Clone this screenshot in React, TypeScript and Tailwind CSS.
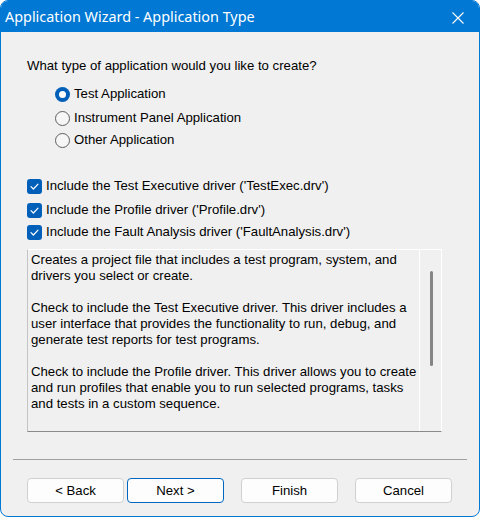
import React, { useState } from "react";

const types = ["Test Application", "Instrument Panel Application", "Other Application"];

const drivers = [
  "Include the Test Executive driver ('TestExec.drv')",
  "Include the Profile driver ('Profile.drv')",
  "Include the Fault Analysis driver ('FaultAnalysis.drv')",
];

const description = [
  ["Creates a project file that includes a test program, system, and", "drivers you select or create."],
  [
    "Check to include the Test Executive driver. This driver includes a",
    "user interface that provides the functionality to run, debug, and",
    "generate test reports for test programs.",
  ],
  [
    "Check to include the Profile driver. This driver allows you to create",
    "and run profiles that enable you to run selected programs, tasks",
    "and tests in a custom sequence.",
  ],
];

const Radio = ({ checked }: { checked: boolean }) =>
  checked ? (
    <span className="w-[15px] h-[15px] rounded-full bg-[#005fb8] flex items-center justify-center shrink-0">
      <span className="w-[7px] h-[7px] rounded-full bg-white" />
    </span>
  ) : (
    <span className="w-[15px] h-[15px] rounded-full border border-[#5f5f5f] bg-[#f6f6f6] shrink-0" />
  );

const Check = () => (
  <span className="w-[15px] h-[15px] rounded-[3px] bg-[#005fb8] flex items-center justify-center shrink-0">
    <svg width="9" height="7" viewBox="0 0 9 7" fill="none">
      <path d="M1 3.6 L3.4 6 L8 1.2" stroke="white" strokeWidth="1.2" strokeLinecap="round" strokeLinejoin="round" />
    </svg>
  </span>
);

export default function App() {
  const [type, setType] = useState(0);

  return (
    <div className="w-[480px] h-[517px] flex flex-col bg-[#f0f0f0] border border-[#0078d4] rounded-[8px] overflow-hidden text-[13.2px] text-black font-['Liberation_Sans',Arial,sans-serif]">
      {/* Title bar */}
      <div className="h-[31px] shrink-0 bg-[#0078d4] flex items-center justify-between pl-[4px] pr-[15px] text-white">
        <span className="text-[14.4px] font-['Noto_Sans',sans-serif] leading-none mt-[1px]">
          Application Wizard - Application Type
        </span>
        <svg width="12" height="12" viewBox="0 0 12 12" className="mt-[2px]">
          <path d="M0.5 0.5 L11.5 11.5 M11.5 0.5 L0.5 11.5" stroke="white" strokeWidth="1.1" />
        </svg>
      </div>

      {/* Body */}
      <div className="flex-1 flex flex-col pt-[26px] px-[26px]">
        <div className="leading-[16px]">What type of application would you like to create?</div>

        <div className="flex flex-col pl-[28px] mt-[12px]">
          {types.map((t, i) => (
            <label
              key={t}
              onClick={() => setType(i)}
              className={`flex items-center gap-[4px] h-[16px] leading-[16px] ${i === 1 ? "mt-[8px]" : i === 2 ? "mt-[6px]" : ""}`}
            >
              <Radio checked={type === i} />
              <span>{t}</span>
            </label>
          ))}
        </div>

        <div className="flex flex-col mt-[30px]">
          {drivers.map((d, i) => (
            <div
              key={d}
              className={`flex items-center gap-[4px] h-[16px] leading-[16px] ${i === 1 ? "mt-[8px]" : i === 2 ? "mt-[6px]" : ""}`}
            >
              <Check />
              <span>{d}</span>
            </div>
          ))}
        </div>

        {/* Description box */}
        <div className="mt-[9px] w-[415px] h-[183px] flex border-t border-t-white border-l border-l-[#c4c4c4] border-b border-b-[#8a8a8a] border-r border-r-white">
          <div className="w-[392px] pl-[3px] pt-[2px] leading-[16px] border-r border-r-white">
            {description.map((para, i) => (
              <div key={i} className={i > 0 ? "mt-[16px]" : ""}>
                {para.map((line) => (
                  <div key={line} className="whitespace-nowrap">
                    {line}
                  </div>
                ))}
              </div>
            ))}
          </div>
          <div className="flex-1 flex justify-center pt-[21px]">
            <div className="w-[3px] h-[95px] bg-[#858585] rounded-full ml-[1px]" />
          </div>
        </div>
      </div>

      {/* Footer */}
      <div className="shrink-0 px-[12px]">
        <div className="h-px bg-[#a0a0a0]" />
        <div className="flex items-center pl-[14px] pt-[18px] pb-[13px]">
          <button className="w-[97px] h-[25px] rounded-[4px] bg-[#fdfdfd] border border-[#d0d0d0] leading-none">
            &lt; Back
          </button>
          <button className="ml-[3px] w-[97px] h-[25px] rounded-[4px] bg-[#fdfdfd] border border-[#0067c0] leading-none">
            Next &gt;
          </button>
          <button className="ml-[17px] w-[97px] h-[25px] rounded-[4px] bg-[#fdfdfd] border border-[#d0d0d0] leading-none">
            Finish
          </button>
          <button className="ml-[17px] w-[97px] h-[25px] rounded-[4px] bg-[#fdfdfd] border border-[#d0d0d0] leading-none">
            Cancel
          </button>
        </div>
      </div>
    </div>
  );
}
